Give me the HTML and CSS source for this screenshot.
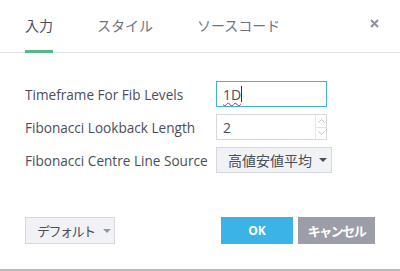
FILE: index.html
```html
<!DOCTYPE html>
<html lang="ja">
<head>
  <meta charset="UTF-8" />
  <title>インジケーター設定</title>
  <link rel="stylesheet" href="styles.css">
</head>
<body>
  <div class="dialog">
    <div class="tabs">
      <div class="tab active">入力</div>
      <div class="tab">スタイル</div>
      <div class="tab">ソースコード</div>
      <div class="close">
        <svg width="9" height="9" viewBox="0 0 9 9">
          <path d="M1 1 L8 8 M8 1 L1 8" stroke="#8e929c" stroke-width="2" />
        </svg>
      </div>
    </div>

    <div class="inputs">
      <div class="row">
        <div class="label">Timeframe For Fib Levels</div>
        <div class="field focused"><span class="spell">1D</span><span class="caret"></span></div>
      </div>
      <div class="row">
        <div class="label">Fibonacci Lookback Length</div>
        <div class="field">
          <span>2</span>
          <div class="spinner">
            <div class="spin">
              <svg width="7" height="4" viewBox="0 0 7 4"><path d="M0.5 3.5 L3.5 0.5 L6.5 3.5" fill="none" stroke="#b6c3d4" /></svg>
            </div>
            <div class="spin">
              <svg width="7" height="4" viewBox="0 0 7 4"><path d="M0.5 0.5 L3.5 3.5 L6.5 0.5" fill="none" stroke="#b6c3d4" /></svg>
            </div>
          </div>
        </div>
      </div>
      <div class="row">
        <div class="label">Fibonacci Centre Line Source</div>
        <div class="select">高値安値平均 <span class="caret-down"></span></div>
      </div>
    </div>

    <div class="footer">
      <div class="btn default"><span class="jp">デフォルト</span><span class="caret-down light"></span></div>
      <div class="actions">
        <div class="btn ok">OK</div>
        <div class="btn cancel"><span class="jp">キャンセル</span></div>
      </div>
    </div>
  </div>
</body>
</html>
```

FILE: styles.css
```css
* {
  box-sizing: border-box;
}

body {
  margin: 0;
  background: #fff;
  font-family: "Open Sans", "Noto Sans CJK JP", sans-serif;
  color: #4a4e59;
}

.dialog {
  height: 271px;
  border-bottom: 2px solid #b7b9bf;
}

/* header tabs */
.tabs {
  display: flex;
  height: 53px;
  padding: 0 21px 0 25px;
  border-bottom: 1px solid #e0e3eb;
}

.tab {
  position: relative;
  margin-right: 44px;
  padding-top: 15px;
  font-family: "Noto Sans CJK JP", sans-serif;
  font-size: 14px;
  line-height: 20px;
  color: #6f7380;
}

.tab.active {
  color: #4a4e59;
}

.tab.active::after {
  content: "";
  position: absolute;
  left: 0;
  right: 0;
  bottom: -1px;
  height: 3px;
  background: #53b987;
}

.close {
  margin-left: auto;
  padding-top: 19px;
  line-height: 0;
}

/* input rows */
.inputs {
  display: flex;
  flex-direction: column;
  gap: 7px;
  padding: 28px 25px 0;
}

.row {
  display: grid;
  grid-template-columns: 191px auto;
  align-items: center;
}

.label {
  font-size: 13.6px;
}

.field {
  position: relative;
  display: flex;
  align-items: center;
  width: 111px;
  height: 26px;
  padding-left: 6px;
  border: 1px solid #d6d8de;
  font-size: 14px;
  color: #4a4e59;
}

.field.focused {
  border-color: #3cb1e4;
}

.spell {
  text-decoration: underline wavy #e3242b;
  text-decoration-thickness: 1px;
  text-underline-offset: 2px;
}

.caret {
  width: 1px;
  height: 16px;
  background: #333;
}

.spinner {
  margin-left: auto;
  display: flex;
  flex-direction: column;
  width: 11px;
  height: 24px;
  border-left: 1px solid #e4e6ea;
}

.spin {
  flex: 1;
  display: flex;
  align-items: center;
  justify-content: center;
  line-height: 0;
}

.spin + .spin {
  border-top: 1px solid #e4e6ea;
}

.select {
  display: flex;
  align-items: center;
  width: 116px;
  height: 26px;
  padding-left: 11px;
  background: #f1f2f6;
  border: 1px solid #d6d8de;
  font-family: "Noto Sans CJK JP", sans-serif;
  font-size: 14px;
}

.caret-down {
  display: inline-block;
  margin-left: 7px;
  border-top: 4px solid #4a4e59;
  border-left: 4px solid transparent;
  border-right: 4px solid transparent;
}

.caret-down.light {
  border-top-color: #9598a1;
  margin-left: 8px;
}

/* footer buttons */
.footer {
  display: flex;
  justify-content: space-between;
  padding: 44px 25px 0;
}

.actions {
  display: flex;
  gap: 5px;
}

.btn {
  display: flex;
  align-items: center;
  justify-content: center;
  height: 27px;
  font-family: "Noto Sans CJK JP", sans-serif;
  font-size: 13px;
}

.btn .jp {
  letter-spacing: -1.5px;
}

.btn.default {
  justify-content: flex-start;
  width: 90px;
  padding-left: 11px;
  background: #f1f2f6;
  border: 1px solid #d6d8de;
}

.btn.ok {
  width: 72px;
  background: #3cb3e6;
  color: #fff;
  font-family: "Open Sans", sans-serif;
  font-size: 12px;
  font-weight: bold;
}

.btn.cancel {
  width: 77px;
  background: #9b9ea8;
  color: #fff;
  font-weight: bold;
}
```
